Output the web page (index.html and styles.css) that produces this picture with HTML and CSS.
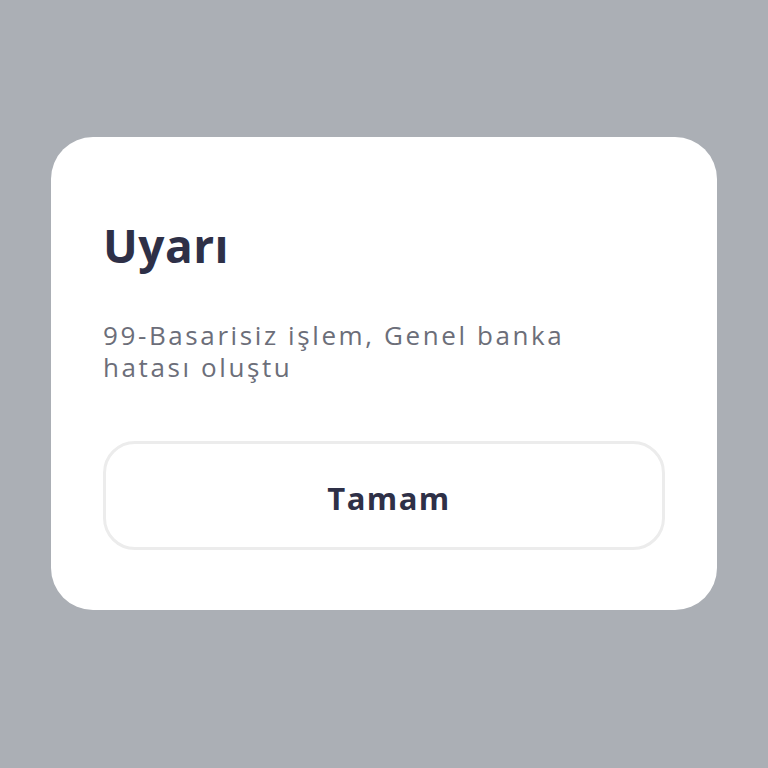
FILE: index.html
```html
<!DOCTYPE html>
<html lang="tr">
<head>
<meta charset="utf-8">
<link rel="stylesheet" href="styles.css">
</head>
<body>
<div class="screen">
  <div class="dialog">
    <h1 class="title">Uyarı</h1>
    <p class="message">99-Basarisiz işlem, Genel banka hatası oluştu</p>
    <button class="btn">Tamam</button>
  </div>
</div>
</body>
</html>
```

FILE: styles.css
```css
html, body {
  margin: 0;
  padding: 0;
  background: #abafb5;
}
.screen {
  width: 768px;
  height: 768px;
  padding-top: 137px;
  padding-left: 51px;
  box-sizing: border-box;
}
.dialog {
  width: 666px;
  height: 473px;
  box-sizing: border-box;
  background: #ffffff;
  border-radius: 42px;
  padding: 80px 52px 0 52px;
  display: flex;
  flex-direction: column;
  font-family: "Open Sans", "Liberation Sans", sans-serif;
}
.title {
  margin: 0;
  font-size: 46px;
  line-height: 56px;
  font-weight: 700;
  color: #2e3047;
  letter-spacing: 0.5px;
}
.message {
  margin: 46px 0 0 0;
  width: 480px;
  font-size: 26px;
  line-height: 32px;
  color: #6c6e79;
  letter-spacing: 2.6px;
}
.btn {
  margin-top: 58px;
  width: 562px;
  height: 109px;
  box-sizing: border-box;
  background: #ffffff;
  border: 3px solid #ececec;
  border-radius: 32px;
  font-family: "Open Sans", "Liberation Sans", sans-serif;
  font-size: 31px;
  font-weight: 700;
  color: #2e3047;
  letter-spacing: 1.4px;
  padding: 4px 0 0 10px;
}
```
